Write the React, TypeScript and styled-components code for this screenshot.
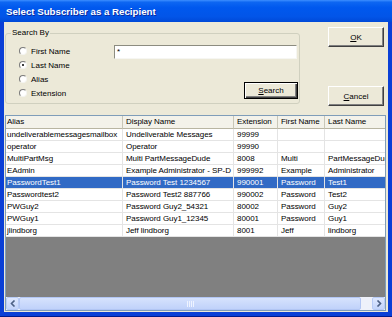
import React from "react"
import styled, { createGlobalStyle } from "styled-components"

type Subscriber = {
  alias: string
  displayName: string
  extension: string
  firstName: string
  lastName: string
  selected?: boolean
}

const subscribers: Subscriber[] = [
  { alias: "undeliverablemessagesmailbox", displayName: "Undeliverable Messages", extension: "99999", firstName: "", lastName: "" },
  { alias: "operator", displayName: "Operator", extension: "99990", firstName: "", lastName: "" },
  { alias: "MultiPartMsg", displayName: "Multi PartMessageDude", extension: "8008", firstName: "Multi", lastName: "PartMessageDude" },
  { alias: "EAdmin", displayName: "Example Administrator - SP-D", extension: "999992", firstName: "Example", lastName: "Administrator" },
  { alias: "PasswordTest1", displayName: "Password Test 1234567", extension: "990001", firstName: "Password", lastName: "Test1", selected: true },
  { alias: "Passwordtest2", displayName: "Password Test2 887766", extension: "990002", firstName: "Password", lastName: "Test2" },
  { alias: "PWGuy2", displayName: "Password Guy2_54321", extension: "80002", firstName: "Password", lastName: "Guy2" },
  { alias: "PWGuy1", displayName: "Password Guy1_12345", extension: "80001", firstName: "Password", lastName: "Guy1" },
  { alias: "jlindborg", displayName: "Jeff lindborg", extension: "8001", firstName: "Jeff", lastName: "lindborg" },
]

const searchFields = ["First Name", "Last Name", "Alias", "Extension"]
const columns = ["Alias", "Display Name", "Extension", "First Name", "Last Name"]

const GlobalStyle = createGlobalStyle`
  html, body {
    margin: 0;
    padding: 0;
    background: #ffffff;
  }
  body {
    font-family: "Liberation Sans", Arial, sans-serif;
  }
`

const Window = styled.div`
  width: 392px;
  height: 317px;
  display: flex;
  flex-direction: column;
  background: #0a3fd6;
  border-bottom: 1px solid #001a8c;
  box-sizing: border-box;
  overflow: hidden;
`

const TitleBar = styled.div`
  height: 22px;
  flex: none;
  display: flex;
  align-items: center;
  padding-left: 6px;
  background: linear-gradient(
    to bottom,
    #3d8fff 0%,
    #0d66f2 10%,
    #0058ee 35%,
    #0255e8 75%,
    #0049d8 100%
  );
  color: #ffffff;
  font: bold 9.7px "Liberation Sans", Arial, sans-serif;
  text-shadow: 1px 1px 0 #0a2a9e;
`

const Body = styled.div`
  flex: 1;
  margin: 0 4px 4px 4px;
  padding: 5px 2px 1px 1px;
  background: #ece9d8;
  display: flex;
  flex-direction: column;
  font-size: 8px;
  color: #000000;
`

const TopRow = styled.div`
  display: flex;
  align-items: flex-start;
`

const GroupBox = styled.fieldset`
  width: 295px;
  height: 76px;
  margin: 1px 0 0 0;
  padding: 0;
  box-sizing: border-box;
  border: 1px solid #d0d0bf;
  border-radius: 3px;
  display: flex;
  min-width: 0;
`

const GroupLegend = styled.legend`
  margin-left: 5px;
  padding: 0 1px;
  font-size: 8px;
  line-height: 10px;
`

const RadioList = styled.div`
  display: flex;
  flex-direction: column;
  padding: 6px 0 0 13px;
`

const RadioRow = styled.label`
  height: 14px;
  display: flex;
  align-items: center;
  gap: 4px;
  font-size: 8px;
`

const RadioDot = styled.span<{ $checked?: boolean }>`
  width: 8px;
  height: 8px;
  box-sizing: border-box;
  border-radius: 50%;
  border: 1px solid;
  border-color: #7a7a7a #f4f4f0 #f4f4f0 #7a7a7a;
  background: #ffffff;
  display: flex;
  align-items: center;
  justify-content: center;

  &::after {
    content: "";
    width: 2px;
    height: 2px;
    border-radius: 50%;
    background: ${(p) => (p.$checked ? "#000000" : "transparent")};
  }
`

const SearchPane = styled.div`
  margin-left: auto;
  width: 185px;
  display: flex;
  flex-direction: column;
  align-items: flex-end;
  padding: 7px 0 0 0;
`

const TextInput = styled.div`
  align-self: flex-start;
  width: 183px;
  height: 14px;
  box-sizing: border-box;
  border: 1px solid;
  border-color: #8c8c80 #f6f6f2 #f6f6f2 #8c8c80;
  background: #ffffff;
  font-size: 8px;
  line-height: 10px;
  padding: 1px 2px;
`

const WinButton = styled.button<{ $default?: boolean; $w: number; $h: number }>`
  width: ${(p) => p.$w}px;
  height: ${(p) => p.$h}px;
  margin: 0;
  padding: 0;
  box-sizing: border-box;
  background: #ece9d8;
  color: #000000;
  font: 8px "Liberation Sans", Arial, sans-serif;
  border: 1px solid;
  border-color: ${(p) => (p.$default ? "#000000" : "#ffffff #404040 #404040 #ffffff")};
  box-shadow: ${(p) =>
    p.$default
      ? "inset 1px 1px 0 #ffffff, inset -1px -1px 0 #404040, inset -2px -2px 0 #808080"
      : "inset -1px -1px 0 #808080"};

  u {
    text-decoration: underline;
  }
`

const SearchButton = styled(WinButton)`
  margin-top: 23px;
  margin-right: 1px;
`

const ButtonColumn = styled.div`
  margin-left: 28px;
  display: flex;
  flex-direction: column;
  gap: 39px;
`

const Grid = styled.div`
  margin-top: 9px;
  flex: 1;
  display: flex;
  flex-direction: column;
  border: 1px solid #7f9db9;
  background: #808080;
  overflow: hidden;
`

const Rows = styled.div`
  flex: 1;
  overflow: hidden;
`

const Row = styled.div<{ $selected?: boolean; $header?: boolean }>`
  display: grid;
  grid-template-columns: 117px 111px 44px 47px 90px;
  height: ${(p) => (p.$header ? 13 : 12)}px;
  background: ${(p) => (p.$header ? "#f3f2ea" : p.$selected ? "#316ac5" : "#ffffff")};
  color: ${(p) => (p.$selected ? "#ffffff" : "#000000")};
  width: max-content;
`

const Cell = styled.div<{ $header?: boolean; $first?: boolean }>`
  box-sizing: border-box;
  padding-left: ${(p) => (p.$first ? 1 : 3)}px;
  white-space: nowrap;
  overflow: hidden;
  font-size: 8px;
  letter-spacing: -0.05px;
  line-height: ${(p) => (p.$header ? 12 : 11)}px;
  border-right: 1px solid ${(p) => (p.$header ? "#c9c7b8" : "#e4e4e4")};
  border-bottom: 1px solid ${(p) => (p.$header ? "#b8b5a2" : "#e4e4e4")};
`

const ScrollBar = styled.div`
  height: 13px;
  flex: none;
  display: flex;
  background: #eef1fa;
`

const ScrollTrack = styled.div`
  flex: 1;
`

const ScrollArrow = styled.div`
  width: 13px;
  height: 13px;
  box-sizing: border-box;
  border: 1px solid #b7cbf6;
  border-radius: 2px;
  background: linear-gradient(to bottom, #dfe8fe, #c3d4fb);
  display: flex;
  align-items: center;
  justify-content: center;
`

const Thumb = styled.div`
  width: 342px;
  height: 13px;
  box-sizing: border-box;
  border: 1px solid #b2c6f4;
  border-radius: 2px;
  background: linear-gradient(to bottom, #d6e2fd, #c0d2fa);
  display: flex;
  align-items: center;
  justify-content: center;
`

const Chevron = ({ left }: { left?: boolean }) => (
  <svg width="6" height="7" viewBox="0 0 6 7">
    <path
      d={left ? "M4.5 0.5 L1.5 3.5 L4.5 6.5" : "M1.5 0.5 L4.5 3.5 L1.5 6.5"}
      fill="none"
      stroke="#4d6185"
      strokeWidth="1.6"
    />
  </svg>
)

const Grip = () => (
  <svg width="7" height="6" viewBox="0 0 7 6">
    {[0, 2, 4, 6].map((x) => (
      <line key={x} x1={x + 0.5} y1="0" x2={x + 0.5} y2="6" stroke="#eef3ff" />
    ))}
  </svg>
)

export default function App() {
  return (
    <>
      <GlobalStyle />
      <Window>
        <TitleBar>Select Subscriber as a Recipient</TitleBar>
        <Body>
          <TopRow>
            <GroupBox>
              <GroupLegend>Search By</GroupLegend>
              <RadioList>
                {searchFields.map((f) => (
                  <RadioRow key={f}>
                    <RadioDot $checked={f === "Last Name"} />
                    {f}
                  </RadioRow>
                ))}
              </RadioList>
              <SearchPane>
                <TextInput>*</TextInput>
                <SearchButton $default $w={54} $h={17}>
                  <u>S</u>earch
                </SearchButton>
              </SearchPane>
            </GroupBox>
            <ButtonColumn>
              <WinButton $w={56} $h={20}>
                <u>O</u>K
              </WinButton>
              <WinButton $w={56} $h={20}>
                <u>C</u>ancel
              </WinButton>
            </ButtonColumn>
          </TopRow>
          <Grid>
            <Rows>
              <Row $header>
                {columns.map((c, i) => (
                  <Cell key={c} $header $first={i === 0}>
                    {c}
                  </Cell>
                ))}
              </Row>
              {subscribers.map((s) => (
                <Row key={s.alias} $selected={s.selected}>
                  <Cell $first>{s.alias}</Cell>
                  <Cell>{s.displayName}</Cell>
                  <Cell>{s.extension}</Cell>
                  <Cell>{s.firstName}</Cell>
                  <Cell>{s.lastName}</Cell>
                </Row>
              ))}
            </Rows>
            <ScrollBar>
              <ScrollArrow>
                <Chevron left />
              </ScrollArrow>
              <Thumb>
                <Grip />
              </Thumb>
              <ScrollTrack />
              <ScrollArrow>
                <Chevron />
              </ScrollArrow>
            </ScrollBar>
          </Grid>
        </Body>
      </Window>
    </>
  )
}
